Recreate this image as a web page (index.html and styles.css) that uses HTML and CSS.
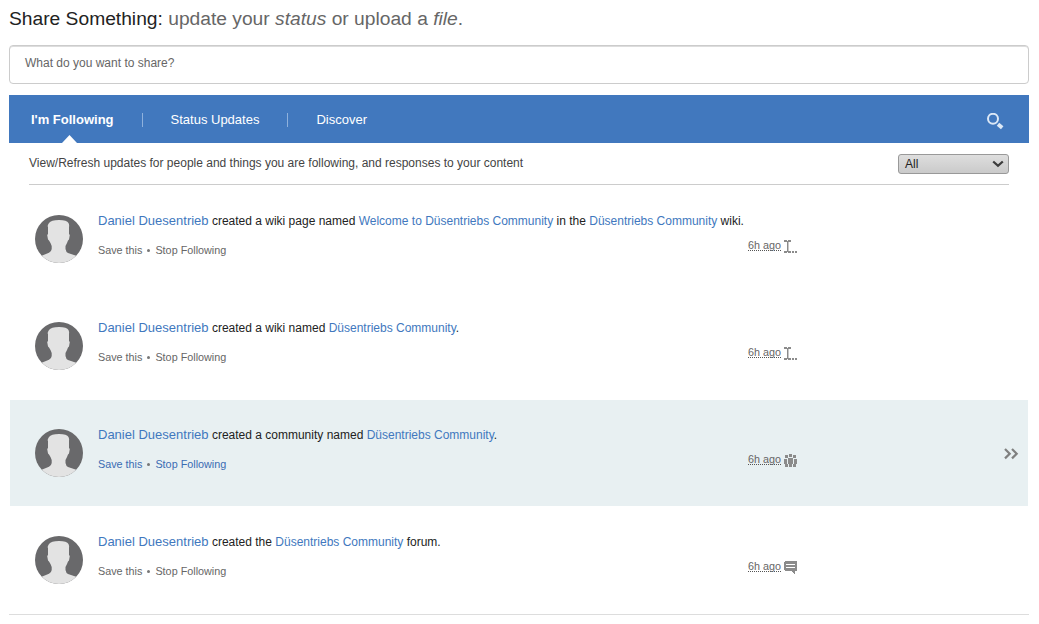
FILE: index.html
```html
<!DOCTYPE html>
<html lang="en">
<head>
<meta charset="utf-8">
<title>Updates</title>
<link rel="stylesheet" href="styles.css">
</head>
<body>
<svg class="sprites" aria-hidden="true">
  <symbol id="avatar" viewBox="0 0 48 48">
    <clipPath id="disc"><circle cx="24" cy="24" r="24"/></clipPath>
    <g clip-path="url(#disc)">
      <rect width="48" height="48" fill="#69696b"/>
      <path fill="#e3e3e3" d="M6 41L14 37.800Q16.500 36.500 16.700 34V31L15.500 28L14 25.500L13 24.500L12.200 20L13 19V12Q12 11 14 8Q16 5 24 5Q32 5 33.500 8Q34.500 10 34 12V19L34.800 20L34 24.500L33 25.500L32 28L30.500 31V34Q31 37 33 38L42 41V48H6Z"/>
    </g>
  </symbol>
  <symbol id="wiki" viewBox="0 0 14 14">
    <path fill="#8b8b8b" d="M0 0H3V1H4V0H7V2H4V11H7V13H4V12H3V13H0V11H3V2H0ZM8 11H10V13H8ZM11 11H13V13H11Z"/>
    <path fill="#c8c8c8" d="M4 2H5V11H4Z"/>
  </symbol>
  <symbol id="community" viewBox="0 0 14 14">
    <path fill="#8b8b8b" d="M5 0H8V3H5ZM4 4H9V10H8V13H5V10H4ZM1 1H4V4H1ZM9 1H12V4H9ZM0 5H3V10H4V13H1V10H0ZM10 5H13V10H12V13H9V10H10Z"/>
  </symbol>
  <symbol id="forum" viewBox="0 0 14 14">
    <path fill="#8b8b8b" d="M1 0H12L13 1V9L12 10H11V13H10L7 10H1L0 9V1Z"/>
    <path fill="#fff" d="M2 3H11V4H2ZM2 6H11V7H2Z"/>
  </symbol>
</svg>
<main class="page">
  <h1 class="title">Share Something: <span class="hint">update your <em>status</em> or upload a <em>file</em>.</span></h1>
  <div class="share">What do you want to share?</div>
  <nav class="tabs">
    <a class="tab active">I'm Following</a>
    <a class="tab">Status Updates</a>
    <a class="tab">Discover</a>
    <svg class="search" width="18" height="18" viewBox="0 0 18 18" fill="none" stroke="#dce8f6"><circle cx="7" cy="5.800" r="5" stroke-width="2"/><path d="M12 11.200L16.200 14.800" stroke-width="3.800"/></svg>
  </nav>
  <div class="filter">
    <span>View/Refresh updates for people and things you are following, and responses to your content</span>
    <div class="select">All<svg width="12" height="8" viewBox="0 0 12 8" fill="none" stroke="#3c3c3c" stroke-width="2.300"><path d="M1.200 1.500L6 5.800L10.800 1.500"/></svg></div>
  </div>
  <div class="stream">
    <article class="entry">
      <svg class="avatar"><use href="#avatar"/></svg>
      <div class="body">
        <p class="text"><a class="name">Daniel Duesentrieb</a> created a wiki page named <a>Welcome to Düsentriebs Community</a> in the <a>Düsentriebs Community</a> wiki.</p>
        <div class="actions"><span>Save this</span><i class="dot"></i><span>Stop Following</span></div>
      </div>
      <div class="meta"><span class="time">6h ago</span><svg class="kind"><use href="#wiki"/></svg></div>
    </article>
    <article class="entry">
      <svg class="avatar"><use href="#avatar"/></svg>
      <div class="body">
        <p class="text"><a class="name">Daniel Duesentrieb</a> created a wiki named <a>Düsentriebs Community</a>.</p>
        <div class="actions"><span>Save this</span><i class="dot"></i><span>Stop Following</span></div>
      </div>
      <div class="meta"><span class="time">6h ago</span><svg class="kind"><use href="#wiki"/></svg></div>
    </article>
    <article class="entry selected">
      <svg class="avatar"><use href="#avatar"/></svg>
      <div class="body">
        <p class="text"><a class="name">Daniel Duesentrieb</a> created a community named <a>Düsentriebs Community</a>.</p>
        <div class="actions"><span>Save this</span><i class="dot"></i><span>Stop Following</span></div>
      </div>
      <div class="meta"><span class="time">6h ago</span><svg class="kind"><use href="#community"/></svg></div>
      <svg class="more" width="15" height="12" viewBox="0 0 15 12" fill="none" stroke="#808080" stroke-width="2.200"><path d="M1 1L5.700 5.700L1 10.400M8 1L12.700 5.700L8 10.400"/></svg>
    </article>
    <article class="entry">
      <svg class="avatar"><use href="#avatar"/></svg>
      <div class="body">
        <p class="text"><a class="name">Daniel Duesentrieb</a> created the <a>Düsentriebs Community</a> forum.</p>
        <div class="actions"><span>Save this</span><i class="dot"></i><span>Stop Following</span></div>
      </div>
      <div class="meta"><span class="time">6h ago</span><svg class="kind"><use href="#forum"/></svg></div>
    </article>
  </div>
</main>
</body>
</html>
```
FILE: styles.css
```css
* { box-sizing: border-box; }
body {
  margin: 0;
  background: #fff;
  color: #222;
  font: 12px/16px "Liberation Sans", Arial, sans-serif;
}
.sprites { position: absolute; width: 0; height: 0; }
.page { width: 1020px; margin-left: 9px; padding-top: 7px; }
.title { margin: 0; height: 38px; font-size: 19.230px; line-height: 24px; font-weight: normal; color: #222; }
.hint { color: #666; }
.share {
  height: 39px;
  padding: 9px 15px;
  border: 1px solid #ccc;
  border-radius: 4px;
  box-shadow: inset 0 1px #ddd;
  color: #666;
}
.tabs {
  display: flex;
  height: 48px;
  margin-top: 11px;
  padding: 0 25px 0 22px;
  background: #4178be;
  color: #fff;
  font-size: 13px;
  line-height: 16px;
}
.tab { position: relative; margin: 17px 0 0; }
.tab + .tab { padding-left: 57px; }
.tab + .tab::before {
  content: "";
  position: absolute;
  left: 28px;
  top: 1px;
  width: 1px;
  height: 14px;
  background: #8fb1dc;
}
.active { font-weight: bold; }
.active::after {
  content: "";
  position: absolute;
  left: 31px;
  top: 23px;
  width: 15px;
  height: 8px;
  background: #fff;
  clip-path: polygon(50% 0, 100% 100%, 0 100%);
}
.search { margin: 18px 0 0 auto; }
.filter {
  display: flex;
  justify-content: space-between;
  height: 42px;
  margin: 0 20px;
  padding-top: 11px;
  border-bottom: 1px solid #ccc;
  color: #444;
  line-height: 18px;
}
.select {
  display: flex;
  justify-content: space-between;
  align-items: center;
  width: 111px;
  height: 20px;
  padding: 0 4px 0 6px;
  border: 1px solid #999;
  border-radius: 3px;
  background: linear-gradient(#dedede, #cacaca);
  color: #222;
}
.stream { padding-top: 1px; border-bottom: 1px solid #ddd; }
.entry {
  display: flex;
  height: 106px;
  margin: 0 1px 1px;
  padding: 29px 9px 0 25px;
}
.selected { background: #e8f0f2; }
.avatar { flex: none; width: 48px; height: 48px; }
.body { width: 650px; margin-left: 15px; white-space: nowrap; }
.text { margin: -2px 0 0; line-height: 16px; }
.text a { color: #4178be; }
.text .name { font-size: 13px; }
.actions { display: flex; align-items: center; margin-top: 14px; font-size: 10.800px; line-height: 14px; color: #666; }
.selected .actions { color: #3b6cb3; }
.dot { width: 3px; height: 3px; margin: 1px 5px 0; border-radius: 50%; background: #777; }
.meta { display: flex; align-items: flex-start; padding-top: 24px; font-size: 10.800px; color: #666; }
.time { width: 33px; height: 12px; white-space: nowrap; line-height: 12px; border-bottom: 1px dotted #555; }
.kind { width: 14px; height: 14px; margin: 1px 0 0 3px; shape-rendering: crispEdges; }
.more { margin: 19px 0 0 auto; }
```
